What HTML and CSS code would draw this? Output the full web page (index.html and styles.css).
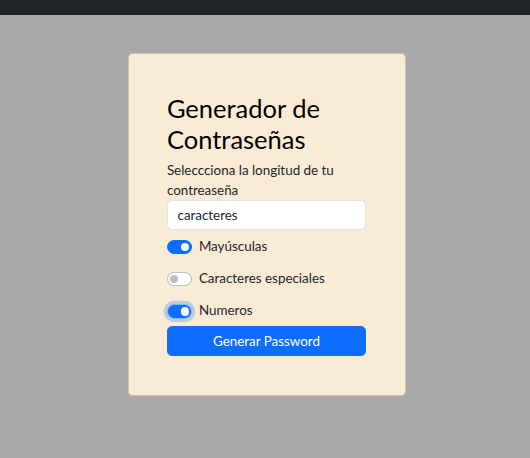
FILE: index.html
```html
<!DOCTYPE html>
<html lang="es">
<head>
<meta charset="utf-8">
<title>Generador de Contraseñas</title>
<link rel="stylesheet" href="styles.css">
</head>
<body>
<nav class="navbar"></nav>
<main class="page">
  <section class="card">
    <h1 class="title">Generador de Contraseñas</h1>
    <label class="field-label" for="len">Seleccciona la longitud de tu contreaseña</label>
    <input class="text-input" id="len" type="text" value="caracteres">
    <div class="switch-row">
      <span class="switch on"></span>
      <span class="switch-label">Mayúsculas</span>
    </div>
    <div class="switch-row">
      <span class="switch"></span>
      <span class="switch-label">Caracteres especiales</span>
    </div>
    <div class="switch-row last">
      <span class="switch on focus"></span>
      <span class="switch-label">Numeros</span>
    </div>
    <button class="btn" type="button">Generar Password</button>
  </section>
</main>
</body>
</html>
```
FILE: styles.css
```css
* { box-sizing: border-box; }
html, body { margin: 0; padding: 0; }
body {
  background: #a9a9a9;
  font-family: Lato, "Noto Sans", sans-serif;
  font-size: 13.4px;
  line-height: 1.5;
  color: #212529;
  height: 458px;
}
.navbar {
  height: 15px;
  background: #212529;
}
.page {
  display: flex;
  justify-content: center;
  padding: 38px 0 0 3px;
}
.card {
  width: 278px;
  display: flex;
  flex-direction: column;
  background: #faebd7;
  border: 1px solid rgba(0, 0, 0, 0.175);
  border-radius: 4.8px;
  padding: 38.4px;
}
.title {
  margin: 0 0 6px;
  padding-top: 1px;
  font-size: 25.5px;
  font-weight: 400;
  line-height: 31px;
  color: #000;
}
.field-label {
  display: block;
  line-height: 19.2px;
}
.text-input {
  display: block;
  width: 100%;
  height: 30.4px;
  margin: 0 0 6.4px;
  padding: 4.8px 9.6px;
  font: inherit;
  color: #212529;
  background: #fff;
  border: 1px solid #dee2e6;
  border-radius: 4.8px;
  outline: none;
}
.switch-row {
  display: flex;
  align-items: flex-start;
  min-height: 19.2px;
  margin-bottom: 13.2px;
}
.switch-row.last { margin-bottom: 5.4px; }
.switch {
  position: relative;
  flex: none;
  width: 25.6px;
  height: 14.4px;
  margin-top: 3px;
  margin-right: 6.4px;
  border: 1px solid rgba(0, 0, 0, 0.25);
  border-radius: 8px;
  background: #fff;
}
.switch::after {
  content: "";
  position: absolute;
  top: 2px;
  left: 2px;
  width: 8.4px;
  height: 8.4px;
  border-radius: 50%;
  background: #bfbfbf;
}
.switch.on {
  background: #0d6efd;
  border-color: #0d6efd;
}
.switch.on::after {
  left: auto;
  right: 2px;
  background: #fff;
}
.switch.focus {
  border-color: #86b7fe;
  box-shadow: 0 0 0 3.2px rgba(13, 110, 253, 0.25);
}
.switch-label { line-height: 19.2px; }
.btn {
  display: block;
  width: 100%;
  height: 30.4px;
  padding: 0;
  font: inherit;
  color: #fff;
  background: #0d6efd;
  border: 1px solid #0d6efd;
  border-radius: 4.8px;
}
```
